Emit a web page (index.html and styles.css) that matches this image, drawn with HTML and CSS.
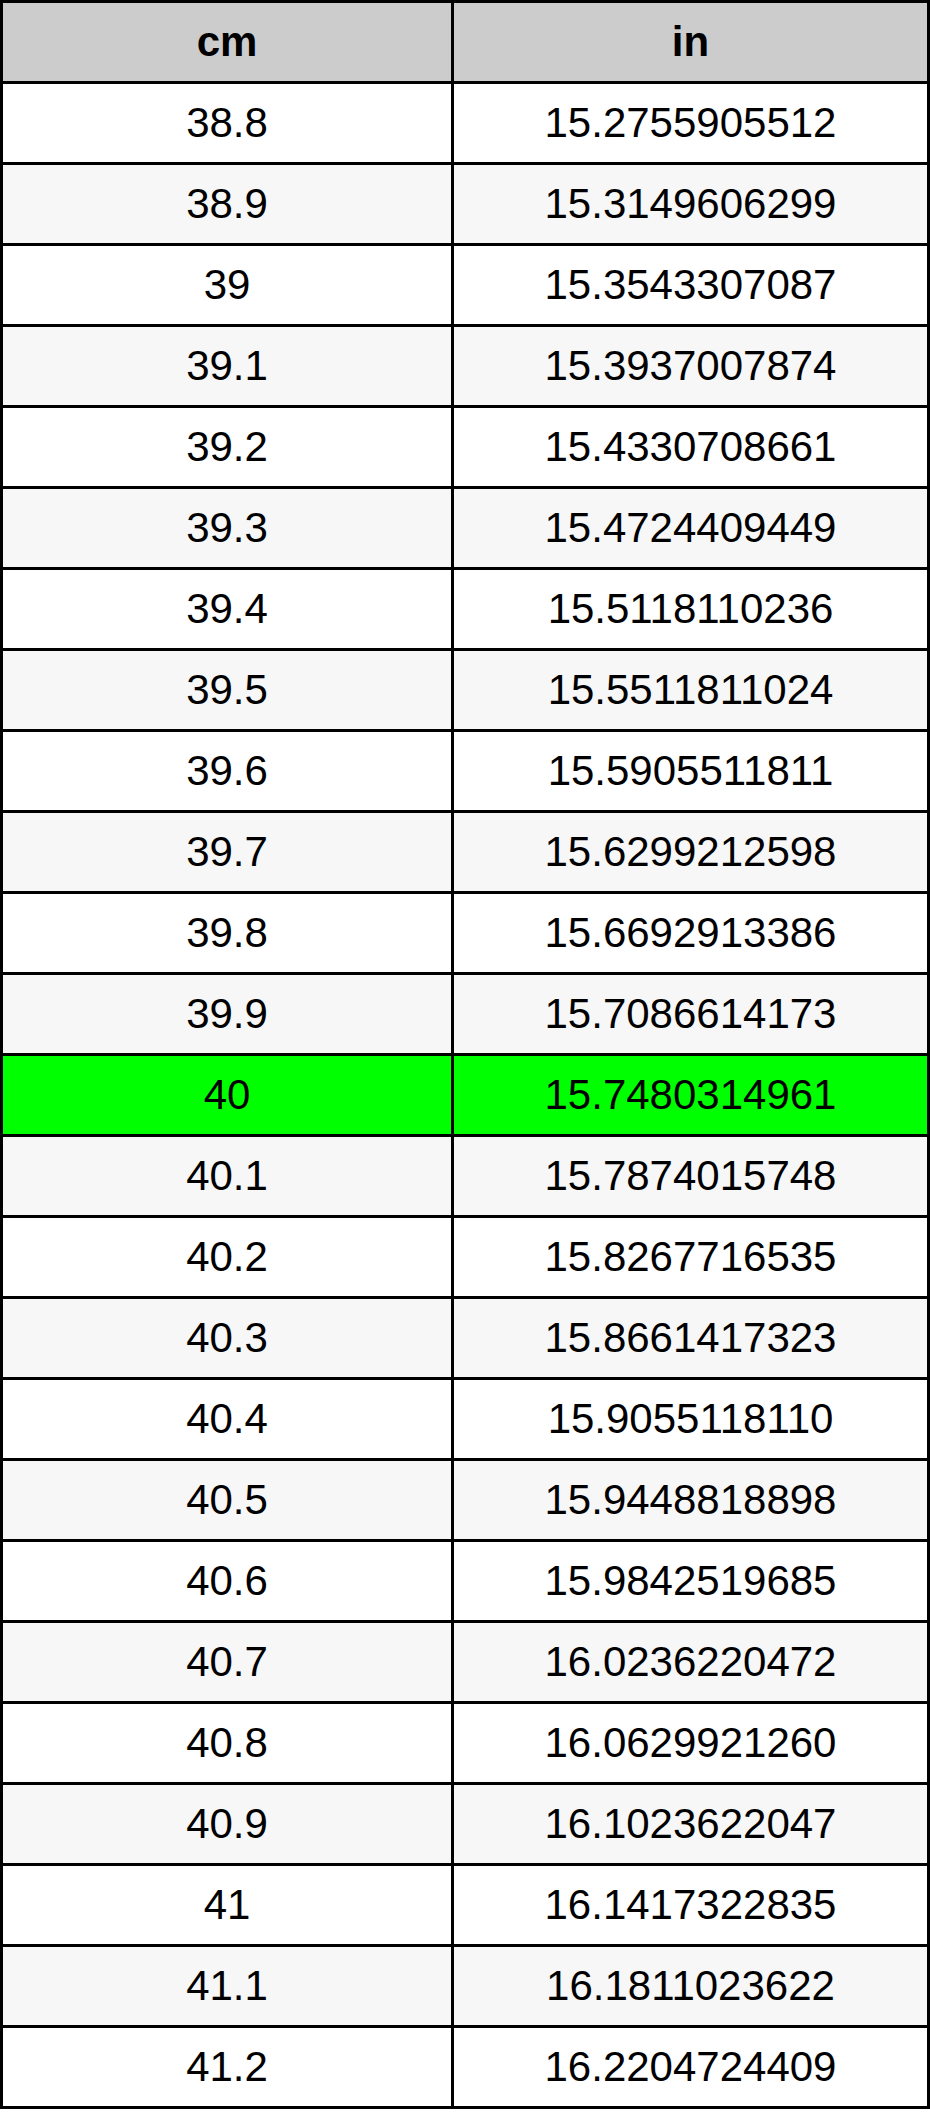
FILE: index.html
```html
<!DOCTYPE html>
<html>
<head>
<meta charset="utf-8">
<link rel="stylesheet" href="styles.css">
</head>
<body>
<table class="conv">
<thead>
<tr><th class="c1">cm</th><th class="c2">in</th></tr>
</thead>
<tbody>
<tr><td>38.8</td><td>15.2755905512</td></tr>
<tr><td>38.9</td><td>15.3149606299</td></tr>
<tr><td>39</td><td>15.3543307087</td></tr>
<tr><td>39.1</td><td>15.3937007874</td></tr>
<tr><td>39.2</td><td>15.4330708661</td></tr>
<tr><td>39.3</td><td>15.4724409449</td></tr>
<tr><td>39.4</td><td>15.5118110236</td></tr>
<tr><td>39.5</td><td>15.5511811024</td></tr>
<tr><td>39.6</td><td>15.5905511811</td></tr>
<tr><td>39.7</td><td>15.6299212598</td></tr>
<tr><td>39.8</td><td>15.6692913386</td></tr>
<tr><td>39.9</td><td>15.7086614173</td></tr>
<tr class="hl"><td>40</td><td>15.7480314961</td></tr>
<tr><td>40.1</td><td>15.7874015748</td></tr>
<tr><td>40.2</td><td>15.8267716535</td></tr>
<tr><td>40.3</td><td>15.8661417323</td></tr>
<tr><td>40.4</td><td>15.9055118110</td></tr>
<tr><td>40.5</td><td>15.9448818898</td></tr>
<tr><td>40.6</td><td>15.9842519685</td></tr>
<tr><td>40.7</td><td>16.0236220472</td></tr>
<tr><td>40.8</td><td>16.0629921260</td></tr>
<tr><td>40.9</td><td>16.1023622047</td></tr>
<tr><td>41</td><td>16.1417322835</td></tr>
<tr><td>41.1</td><td>16.1811023622</td></tr>
<tr><td>41.2</td><td>16.2204724409</td></tr>
</tbody>
</table>
</body>
</html>
```

FILE: styles.css
```css
html, body {
  margin: 0;
  padding: 0;
  background: #ffffff;
}

.conv {
  border-collapse: separate;
  border-spacing: 0;
  width: 930px;
  table-layout: fixed;
  border-left: 3px solid #000;
  border-top: 3px solid #000;
  font-family: "Liberation Sans", Arial, sans-serif;
  font-size: 42px;
  color: #000;
}

.conv th,
.conv td {
  height: 78px;
  padding: 0;
  text-align: center;
  vertical-align: middle;
  border-right: 3px solid #000;
  border-bottom: 3px solid #000;
  line-height: 1;
}

.conv th {
  background: #cccccc;
  font-weight: bold;
}

.conv th.c1 {
  width: 448px;
}

.conv th.c2 {
  width: 473px;
}

.conv tbody tr:nth-child(odd) td {
  background: #ffffff;
}

.conv tbody tr:nth-child(even) td {
  background: #f7f7f7;
}

.conv tbody tr.hl td {
  background: #00ff00;
}
```
